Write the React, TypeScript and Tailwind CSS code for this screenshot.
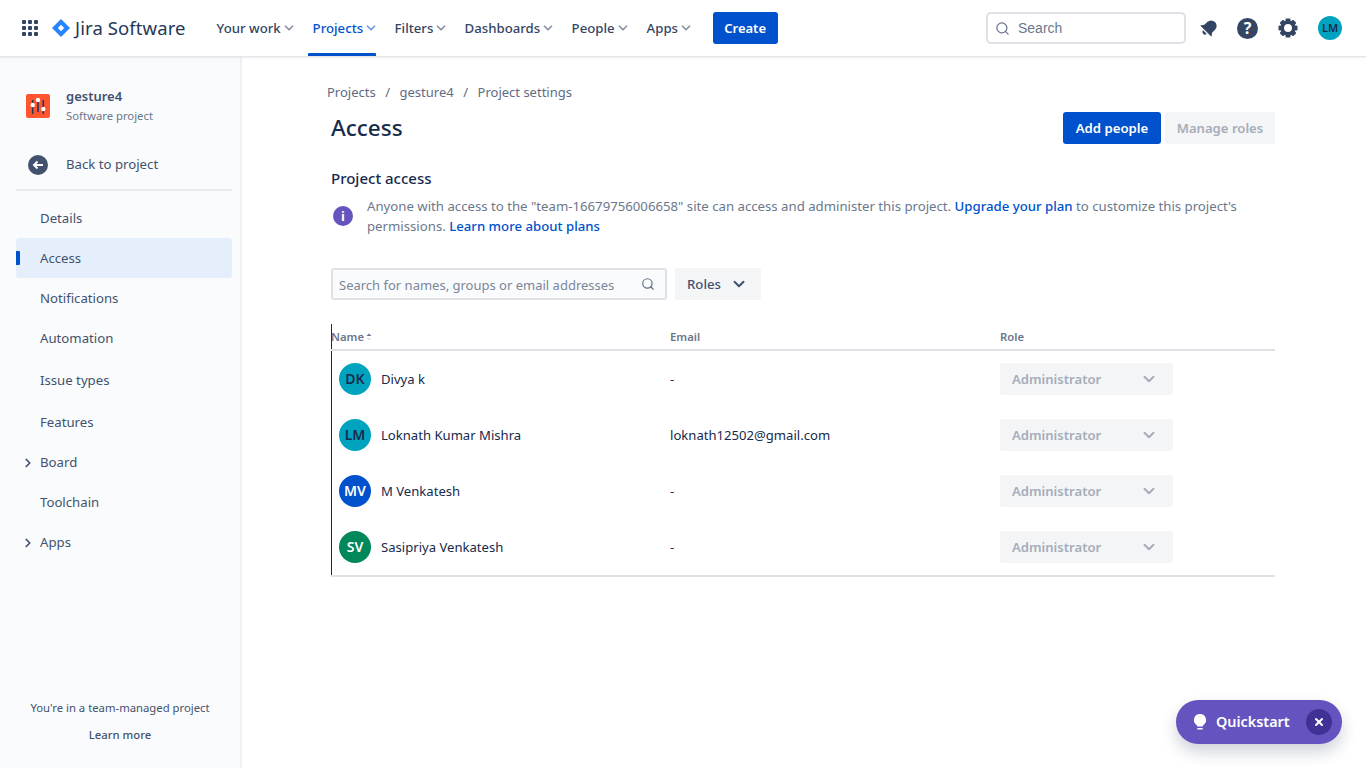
import { ChevronDown, ChevronRight, Search, X } from "lucide-react";

const FONT = "font-['Noto_Sans','Open_Sans',sans-serif]";

const NAV = [
  { label: "Your work", width: "w-[96px]" },
  { label: "Projects", width: "w-[82px]", active: true },
  { label: "Filters", width: "w-[70px]" },
  { label: "Dashboards", width: "w-[107px]" },
  { label: "People", width: "w-[75px]" },
  { label: "Apps", width: "w-[67px]" },
];

const SIDE_ITEMS = [
  { label: "Details", h: "h-10" },
  { label: "Access", h: "h-10", active: true },
  { label: "Notifications", h: "h-10" },
  { label: "Automation", h: "h-10" },
  { label: "Issue types", h: "h-[44px]" },
  { label: "Features", h: "h-10" },
  { label: "Board", h: "h-10", arrow: true },
  { label: "Toolchain", h: "h-10" },
  { label: "Apps", h: "h-10", arrow: true },
];

const PEOPLE = [
  { initials: "DK", name: "Divya k", email: "-", color: "bg-[#00a3bf]" },
  { initials: "LM", name: "Loknath Kumar Mishra", email: "loknath12502@gmail.com", color: "bg-[#00a3bf]" },
  { initials: "MV", name: "M Venkatesh", email: "-", color: "bg-[#0052cc]", light: true },
  { initials: "SV", name: "Sasipriya Venkatesh", email: "-", color: "bg-[#00875a]", light: true },
];

function JiraLogo() {
  return (
    <svg width="18" height="18" viewBox="0 0 18 18">
      <path d="M9 0l9 9-9 9-9-9z" fill="#2684ff" />
      <path d="M9 5.800L12.200 9 9 12.200 5.800 9z" fill="#fff" />
    </svg>
  );
}

function Gear() {
  return (
    <svg className="ml-[19px]" width="22" height="22" viewBox="0 0 22 22" fill="#344563">
      {[0, 45, 90, 135, 180, 225, 270, 315].map((a) => (
        <rect key={a} x="8.500" y="1.500" width="5" height="5" rx="1" transform={`rotate(${a} 11 11)`} />
      ))}
      <circle cx="11" cy="11" r="5.700" fill="none" stroke="#344563" strokeWidth="3.400" />
    </svg>
  );
}

function TopBar() {
  return (
    <header className="relative z-10 flex h-[57px] shrink-0 items-center border-b border-[#e3e5ea] bg-white shadow-[0_1px_2px_rgba(9,30,66,0.08)]">
      <div className="ml-[22px] grid w-4 grid-cols-3 gap-[2px]">
        {Array.from({ length: 9 }).map((_, i) => (
          <span key={i} className="h-1 w-1 rounded-[1px] bg-[#344563]" />
        ))}
      </div>
      <div className="ml-[14px] flex items-center gap-[5px]">
        <JiraLogo />
        <span className="text-[18.5px] tracking-[0.1px] text-[#253858]">Jira Software</span>
      </div>
      <nav className="ml-[27px] flex h-full items-center">
        {NAV.map((item) => (
          <div
            key={item.label}
            className={`relative flex h-full items-center pl-1 ${item.width} ${item.active ? "text-[#0052cc]" : "text-[#344563]"}`}
          >
            <span className="pt-[2px] text-[13.2px] font-medium">{item.label}</span>
            <ChevronDown size={14} strokeWidth={3} className={`ml-[1px] ${item.active ? "text-[#6f97dd]" : "text-[#8993a4]"}`} />
            {item.active && <span className="absolute bottom-0 left-[-1px] h-[3px] w-[68px] rounded-t-[1px] bg-[#0052cc]" />}
          </div>
        ))}
      </nav>
      <button className="ml-[3px] h-8 w-[65px] rounded-[3px] bg-[#0052cc] pt-[1px] text-[13px] font-semibold text-white">Create</button>
      <div className="ml-auto flex h-8 w-[200px] items-center rounded-[5px] border-2 border-[#dfe1e6] bg-white pl-[7px]">
        <Search size={15} strokeWidth={2} className="text-[#6b778c]" />
        <span className="ml-[8px] font-['Liberation_Sans',sans-serif] text-sm text-[#6b778c]">Search</span>
      </div>
      <svg className="ml-[13px]" width="20" height="20" viewBox="0 0 20 20" fill="#344563">
        <g transform="rotate(45 10 10)">
          <path d="M10 1.500a5.500 5.500 0 0 1 5.500 5.500v4l2.500 3.500H2L4.500 11V7A5.500 5.500 0 0 1 10 1.500z" />
          <path d="M7.500 15.800h5a2.500 2.500 0 0 1-5 0z" />
        </g>
      </svg>
      <div className="ml-[18px] flex h-[21px] w-[21px] items-center justify-center rounded-full bg-[#344563] text-[16px] font-bold leading-none text-white">?</div>
      <Gear />
      <div className="mr-6 ml-[19px] flex h-6 w-6 items-center justify-center rounded-full bg-[#00a3bf] text-[11px] font-semibold text-[#172b4d]">LM</div>
    </header>
  );
}

function Sidebar() {
  return (
    <aside className="flex w-[242px] shrink-0 flex-col border-r-2 border-[#f0f1f4] bg-[#fafbfc] pl-4 pr-[8px]">
      <div className="mt-[29px] flex h-10 items-center pl-[10px]">
        <div className="flex h-6 w-6 items-center justify-center rounded-[2px] bg-[#ff5630]">
          <svg width="24" height="24" viewBox="0 0 24 24" fill="none">
            <path d="M6.700 6v14M12 4v14M17.300 6v14" stroke="#253858" strokeWidth="1.600" />
            <circle cx="6.700" cy="11" r="2.200" fill="#fff" />
            <circle cx="12" cy="6" r="2.200" fill="#fff" />
            <circle cx="17.300" cy="15" r="2.200" fill="#fff" />
          </svg>
        </div>
        <div className="ml-4 flex flex-col">
          <span className="text-[13px] font-semibold leading-5 text-[#42526e]">gesture4</span>
          <span className="text-[11.3px] leading-5 text-[#6b778c]">Software project</span>
        </div>
      </div>
      <div className="mt-[19px] box-content flex h-10 items-center border-b-2 border-[#ebecf0] pl-3 pb-[4px]">
        <div className="flex h-5 w-5 items-center justify-center rounded-full bg-[#42526e]">
          <svg width="12" height="12" viewBox="0 0 12 12" fill="none" stroke="#fff" strokeWidth="2">
            <path d="M11 6H2M5.500 2.500L2 6l3.500 3.500" />
          </svg>
        </div>
        <span className="ml-[18px] text-[13.2px] text-[#42526e]">Back to project</span>
      </div>
      <div className="mt-[7px] flex flex-col">
        {SIDE_ITEMS.map((item) => (
          <div
            key={item.label}
            className={`relative flex items-center pl-6 pt-[2px] text-[13.2px] text-[#42526e] ${item.h} ${item.active ? "rounded-[3px] bg-[#e5effb]" : ""}`}
          >
            {item.active && <span className="absolute left-0 top-[13px] h-[14px] w-1 rounded-r-[1px] bg-[#0052cc]" />}
            {item.arrow && <ChevronRight size={14} strokeWidth={3} className="absolute left-[5px] text-[#42526e]" />}
            {item.label}
          </div>
        ))}
      </div>
      <div className="mt-auto mb-[25px] flex flex-col items-center pr-2 text-[11.3px]">
        <span className="leading-4 text-[#42526e]">You're in a team-managed project</span>
        <span className="mt-[11px] font-medium leading-4 text-[#42526e]">Learn more</span>
      </div>
    </aside>
  );
}

function PeopleTable() {
  return (
    <div className="mt-6 border-l border-[#172b4d]">
      <div className="grid h-[25px] grid-cols-[338px_330px_1fr] items-center pt-[1px] text-[11.3px] font-semibold text-[#6b778c]">
        <span className="ml-[-1px] flex items-center">
          Name
          <svg width="8" height="10" viewBox="0 0 8 10" className="ml-[1px]">
            <path d="M4 1.500L6.500 4h-5z" fill="#6b778c" />
            <path d="M4 8.500L6.500 6h-5z" fill="#dfe1e6" />
          </svg>
        </span>
        <span>Email</span>
        <span>Role</span>
      </div>
      <div className="ml-[-1px] border-b-2 border-[#dfe1e6]" />
      {PEOPLE.map((p) => (
        <div key={p.name} className="grid h-14 grid-cols-[338px_330px_1fr] items-center text-[13.1px] text-[#172b4d]">
          <div className="flex items-center pl-[7px]">
            <span
              className={`flex h-8 w-8 items-center justify-center rounded-full text-sm font-semibold ${p.color} ${p.light ? "text-white" : "text-[#172b4d]"}`}
            >
              {p.initials}
            </span>
            <span className="ml-[10px] pt-[2px]">{p.name}</span>
          </div>
          <span className="pt-[2px]">{p.email}</span>
          <div className="flex h-8 w-[173px] items-center justify-between rounded-[3px] bg-[#f4f5f7] pl-3 pr-[15px] font-semibold text-[#a5adba]">
            <span className="pt-[2px]">Administrator</span>
            <ChevronDown size={18} strokeWidth={2.6} className="text-[#a5adba]" />
          </div>
        </div>
      ))}
      <div className="ml-[-1px] border-b-2 border-[#dfe1e6]" />
    </div>
  );
}

export default function App() {
  return (
    <div className={`relative flex h-[768px] w-[1366px] flex-col overflow-hidden bg-white ${FONT}`}>
      <TopBar />
      <div className="flex min-h-0 flex-1">
        <Sidebar />
        <main className="flex-1 pl-[89px] pr-[91px]">
          <div className="mt-[26px] ml-[-4px] flex h-5 items-center text-[13px] text-[#5e6c84]">
            <span>Projects</span>
            <span className="mx-[9.5px]">/</span>
            <span>gesture4</span>
            <span className="mx-[9.5px]">/</span>
            <span>Project settings</span>
          </div>
          <div className="mt-[5px] flex h-10 items-center justify-between">
            <h1 className="text-[22.5px] font-medium text-[#172b4d]">Access</h1>
            <div className="flex gap-1">
              <button className="h-8 w-[98px] rounded-[3px] bg-[#0052cc] pt-[1px] text-[13.2px] font-semibold text-white">Add people</button>
              <button className="h-8 w-[110px] rounded-[3px] bg-[#f4f5f7] pt-[1px] text-[13.1px] font-semibold text-[#a5adba]">Manage roles</button>
            </div>
          </div>
          <h2 className="mt-[20px] text-[15px] font-medium leading-5 text-[#172b4d]">Project access</h2>
          <div className="mt-[8px] flex items-center">
            <div className="ml-[2px] flex h-5 w-5 shrink-0 items-center justify-center rounded-full bg-[#6554c0] text-[13px] font-bold leading-none text-white">i</div>
            <p className="ml-[14px] w-[900px] text-[13.2px] leading-5 text-[#6b778c]">
              Anyone with access to the "team-16679756006658" site can access and administer this project.{" "}
              <span className="font-medium text-[#0052cc]">Upgrade your plan</span> to customize this project's permissions.{" "}
              <span className="font-medium text-[#0052cc]">Learn more about plans</span>
            </p>
          </div>
          <div className="mt-[32px] flex gap-2">
            <div className="flex h-8 w-[336px] items-center justify-between rounded-[3px] border-2 border-[#dfe1e6] bg-[#fafbfc] pl-[6px] pr-[10px]">
              <span className="pt-[3px] text-[13px] text-[#7a869a]">Search for names, groups or email addresses</span>
              <Search size={14} strokeWidth={2} className="text-[#5e6c84]" />
            </div>
            <div className="flex h-8 w-[86px] items-center rounded-[3px] bg-[#f4f5f7] pl-3 text-[13.2px] font-medium text-[#42526e]">
              <span className="pt-[1px]">Roles</span>
              <ChevronDown size={18} strokeWidth={2.6} className="ml-[9px]" />
            </div>
          </div>
          <PeopleTable />
        </main>
      </div>
      <div className="absolute left-[1176px] top-[700px] flex h-11 w-[166px] items-center rounded-full bg-[#6554c0] pl-[16px] shadow-[0_8px_16px_rgba(9,30,66,0.2)]">
        <svg width="16" height="20" viewBox="0 0 16 20" fill="#fff">
          <path d="M8 2a6 6 0 0 0-3.500 10.900c.5.400.8 1 .8 1.600h5.400c0-.6.300-1.200.8-1.600A6 6 0 0 0 8 2z" />
          <rect x="5.300" y="16" width="5.400" height="1.500" rx=".5" />
        </svg>
        <span className="ml-[8px] text-[14.4px] font-semibold text-white">Quickstart</span>
        <span className="ml-auto mr-[10px] flex h-[26px] w-[26px] items-center justify-center rounded-full bg-[#403294]">
          <X size={12} strokeWidth={4} className="text-white" />
        </span>
      </div>
    </div>
  );
}
